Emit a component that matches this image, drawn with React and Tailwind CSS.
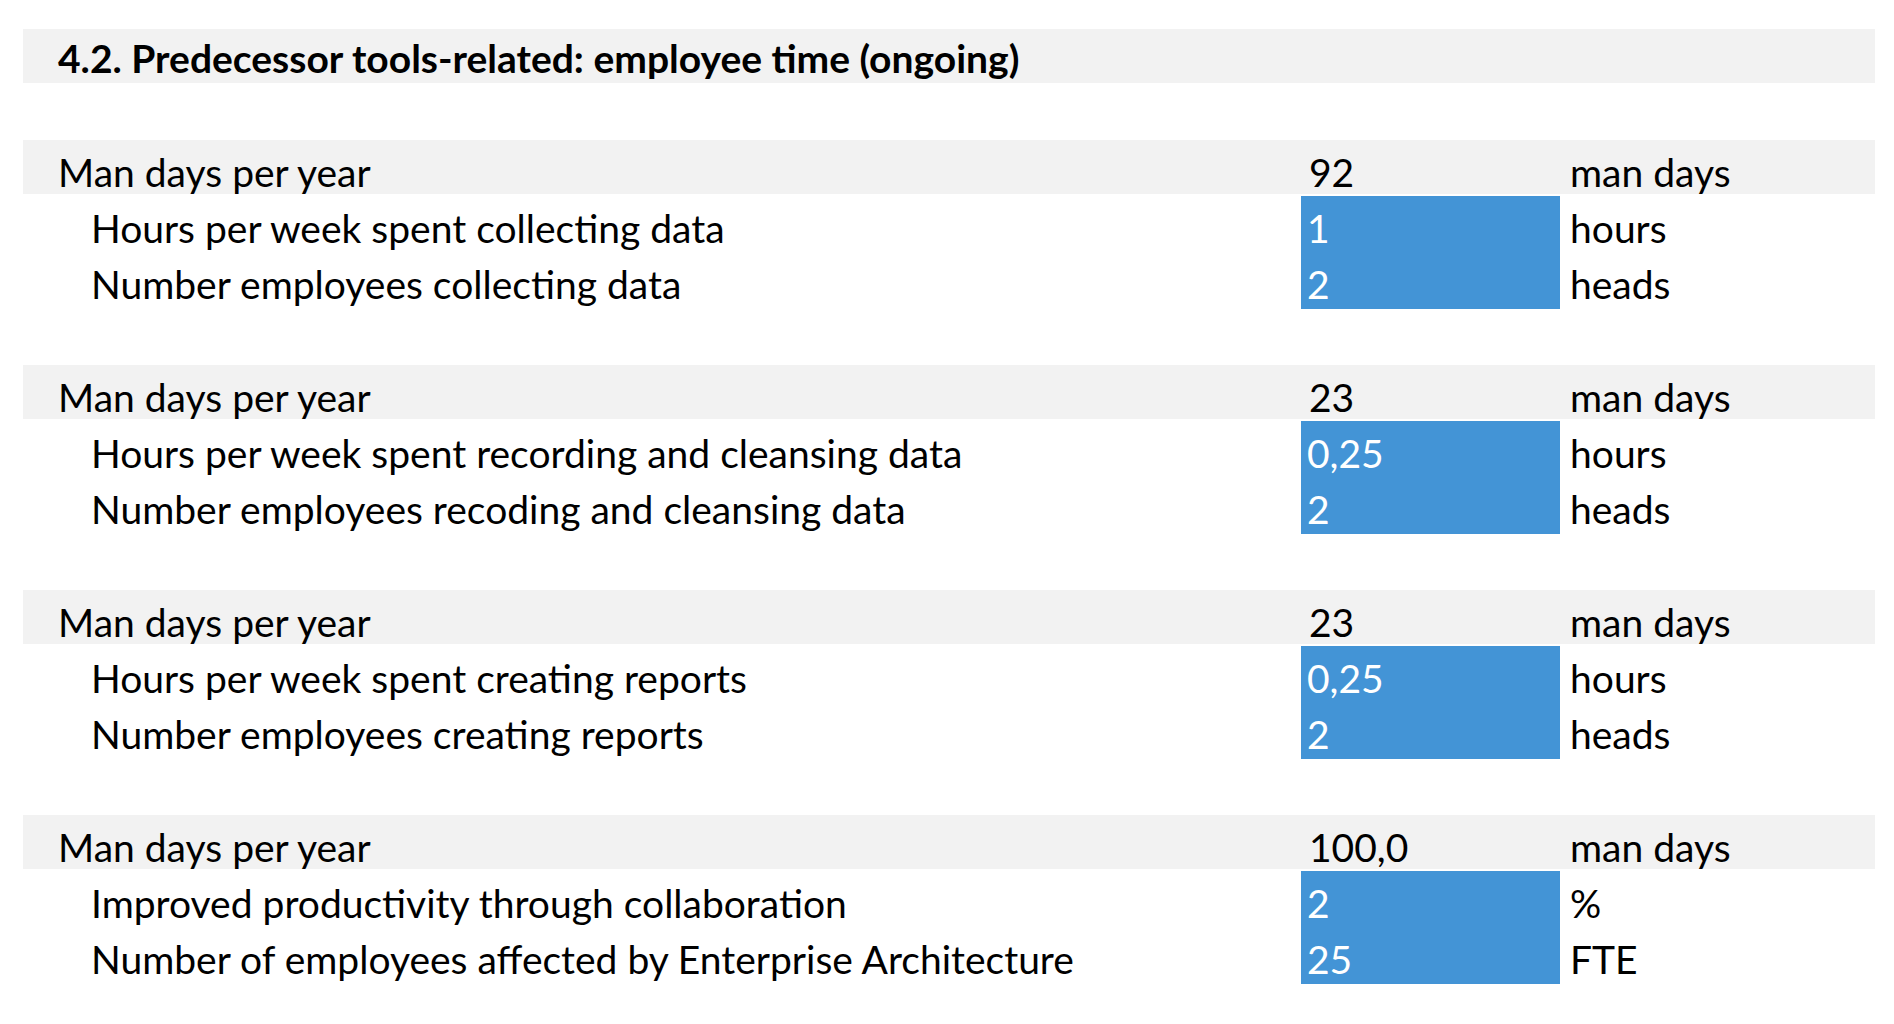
const sections = [
  {
    total: '92',
    rows: [
      { label: 'Hours per week spent collecting data', value: '1', unit: 'hours' },
      { label: 'Number employees collecting data', value: '2', unit: 'heads' },
    ],
  },
  {
    total: '23',
    rows: [
      { label: 'Hours per week spent recording and cleansing data', value: '0,25', unit: 'hours' },
      { label: 'Number employees recoding and cleansing data', value: '2', unit: 'heads' },
    ],
  },
  {
    total: '23',
    rows: [
      { label: 'Hours per week spent creating reports', value: '0,25', unit: 'hours' },
      { label: 'Number employees creating reports', value: '2', unit: 'heads' },
    ],
  },
  {
    total: '100,0',
    rows: [
      { label: 'Improved productivity through collaboration', value: '2', unit: '%' },
      { label: 'Number of employees affected by Enterprise Architecture', value: '25', unit: 'FTE' },
    ],
  },
]

const HeaderRow = ({ total }) => (
  <div className="h-[56px]">
    <div className="flex h-[54px] items-end bg-[#f2f2f2]">
      <div className="-mb-[2px] w-[1278px] pl-[35px] leading-[47px]">Man days per year</div>
      <div className="-mb-[2px] w-[259px] pl-[8px] leading-[47px]">{total}</div>
      <div className="-mb-[2px] flex-1 pl-[10px] leading-[47px]">man days</div>
    </div>
  </div>
)

const InputRow = ({ label, value, unit }) => (
  <div className="flex h-[56.5px] items-end">
    <div className="w-[1278px] pb-[1px] pl-[68px] leading-[47px]">{label}</div>
    <div className="flex h-full w-[259px] items-end bg-[#4394d6] pb-[1px] pl-[6px] leading-[47px] text-white">
      {value}
    </div>
    <div className="flex-1 pb-[1px] pl-[10px] leading-[47px]">{unit}</div>
  </div>
)

export default function App() {
  return (
    <div
      className="h-[1024px] w-[1894px] bg-white pt-[29px] pl-[23px] pr-[19px] text-[39px] text-black"
      style={{ fontFamily: 'Lato, "Open Sans", sans-serif' }}
    >
      <div className="flex h-[54px] items-end bg-[#f2f2f2] pb-[1px] pl-[35px] font-bold leading-[47px]">
        4.2. Predecessor tools-related: employee time (ongoing)
      </div>
      <div className="h-[57px]" />
      {sections.map((s, i) => (
        <div key={i}>
          <HeaderRow total={s.total} />
          {s.rows.map((r) => (
            <InputRow key={r.label} {...r} />
          ))}
          <div className="h-[56px]" />
        </div>
      ))}
    </div>
  )
}
